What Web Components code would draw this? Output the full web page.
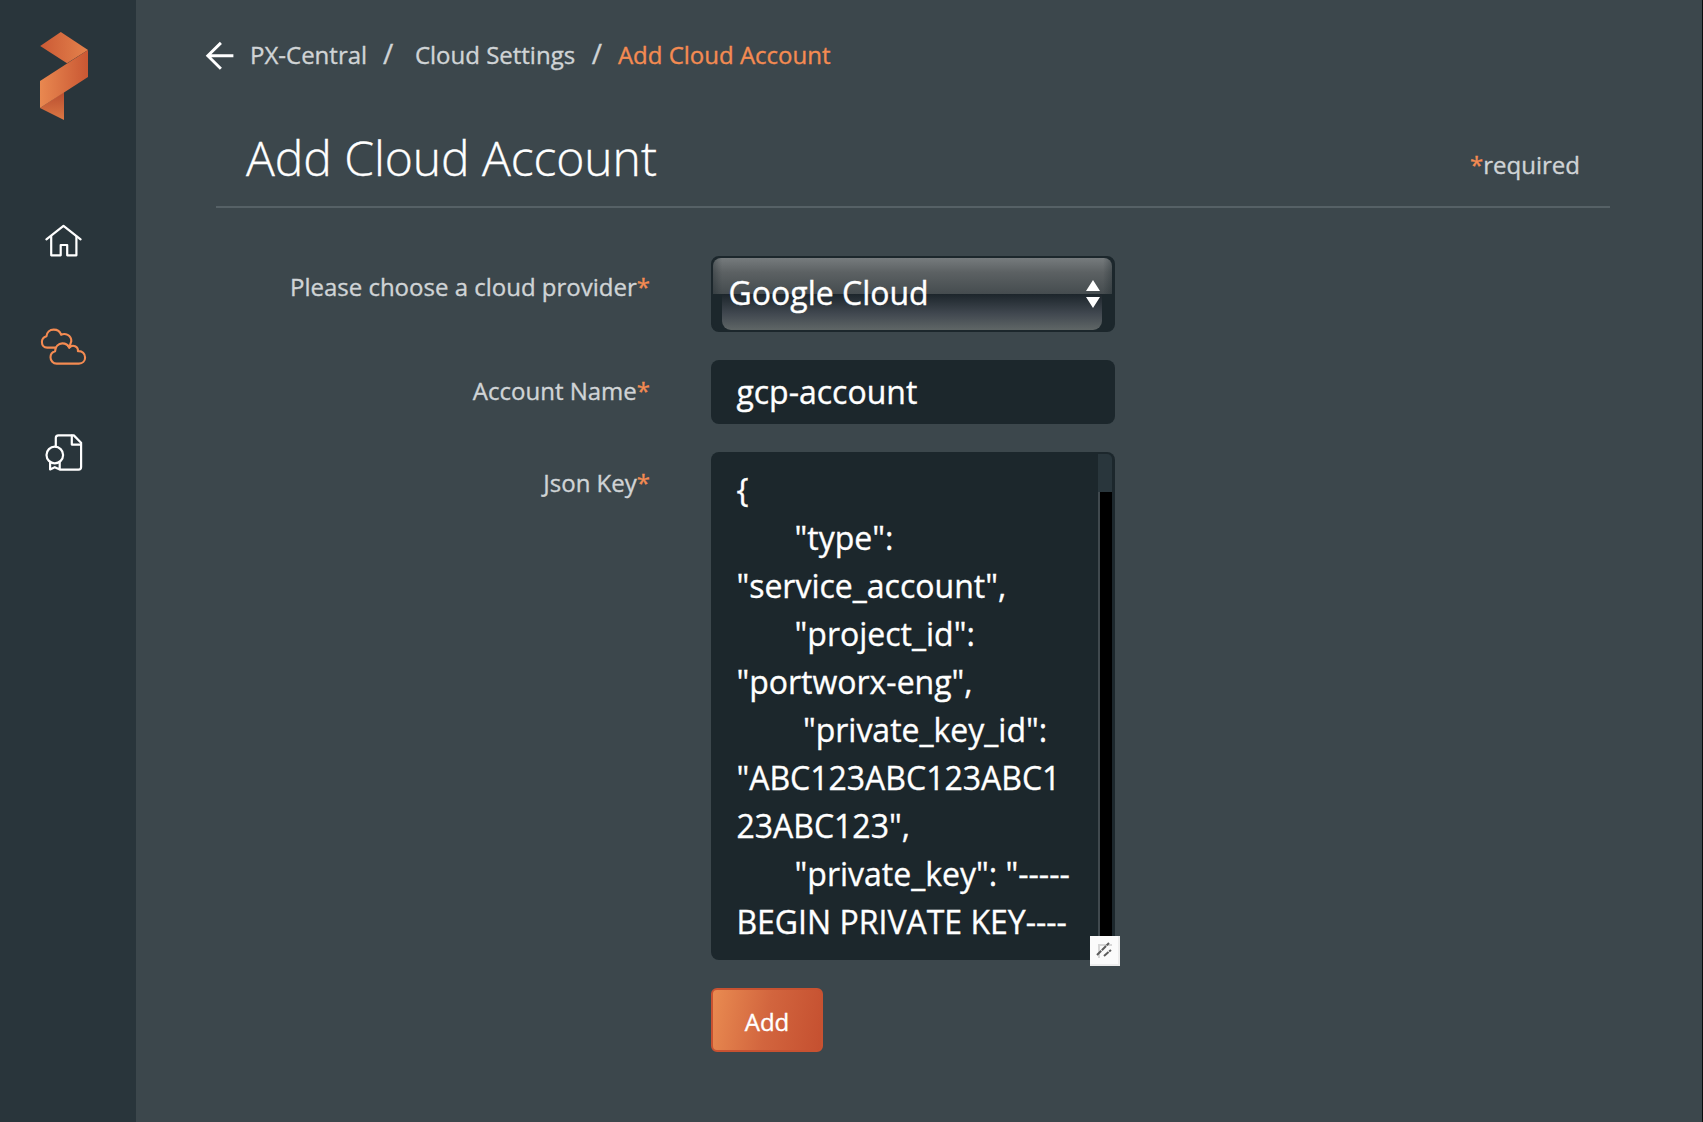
<!DOCTYPE html>
<html lang="en">
<head>
<meta charset="utf-8">
<title>Add Cloud Account</title>
<style>
html, body { margin: 0; height: 100%; overflow: hidden; }
body { font-family: "Open Sans", "Noto Sans", sans-serif; font-size: 24px; line-height: 32px; color: #d0d4d6; background: #3c474c; -webkit-text-stroke: 0.35px currentColor; }
</style>
</head>
<body>
<px-app></px-app>
<script>
function define(name, markup) {
  const template = document.createElement('template');
  template.innerHTML = markup;
  customElements.define(name, class extends HTMLElement {
    constructor() {
      super();
      this.attachShadow({ mode: 'open' }).appendChild(template.content.cloneNode(true));
    }
  });
}

define('px-logo', `
<style>:host{display:block;width:48px;height:88px}svg{display:block}</style>
<svg width="48" height="88" viewBox="40 32 48 88">
  <defs>
    <linearGradient id="a"><stop offset="0" stop-color="#cb5a35"/><stop offset="1" stop-color="#e4824c"/></linearGradient>
    <linearGradient id="b"><stop offset="0" stop-color="#e98850"/><stop offset="1" stop-color="#c95733"/></linearGradient>
    <linearGradient id="c" x1="0" y1="0" x2="0" y2="1"><stop offset="0" stop-color="#b94e30"/><stop offset="1" stop-color="#dc7844"/></linearGradient>
  </defs>
  <path fill="url(#c)" d="M64 92V120L40 108Z"/>
  <path fill="url(#a)" d="M40.2 46L60.8 32L88 50L67 63.2Z"/>
  <path fill="url(#b)" d="M88 50V77L40 108V81Z"/>
</svg>`);

define('px-icon-home', `
<style>:host{display:block;width:40px;height:36px;color:#fff}svg{display:block}</style>
<svg width="40" height="36" viewBox="43.6 222 40 36" fill="none" stroke="currentColor" stroke-width="2.2" stroke-linecap="round" stroke-linejoin="round">
  <path d="M46 239.3L63.1 225.8L80.2 239.3"/><path d="M50.8 236.5V255.3H60.3V245H66.8V255.3H76V236.5"/>
</svg>`);

define('px-icon-clouds', `
<style>:host{display:block;width:48px;height:40px;color:#f48b52}svg{display:block}</style>
<svg width="48" height="40" viewBox="40.3 326 48 40" fill="none" stroke="currentColor" stroke-width="2.1" stroke-linecap="round" stroke-linejoin="round">
  <path d="M56 347.6H47.5C44.2 347.6 42.2 345.2 42.2 342C42.2 339 44 337 46.8 336.2C47 332.3 50 329.6 54 329.6C57.6 329.6 60.4 331.6 61.4 334.8C65.2 332.8 71.8 335 71.6 341.2L70.2 345.5"/>
  <path d="M57 363.6C53.4 363.6 50.8 360.8 50.8 357.2C50.8 354.2 52.6 352 55.4 351.2C55.4 346.8 58.6 343.4 62.6 343.4C65.8 343.4 68.4 345 69.6 347.6C73 343.8 78.8 346.4 78.2 351.2C82.6 350.8 85.4 353.6 85.4 357.4C85.4 361 82.8 363.6 79.2 363.6Z"/>
  <path d="M68.2 345.6L69.6 347.6L71 345.6"/>
</svg>`);

define('px-icon-license', `
<style>:host{display:block;width:40px;height:40px;color:#fff}svg{display:block}</style>
<svg width="40" height="40" viewBox="44.2 432 40 40" fill="none" stroke="currentColor" stroke-width="2.2" stroke-linecap="round" stroke-linejoin="round">
  <path d="M56 446.5V438Q56 435.4 58.6 435.4H74L81.3 442.7V467Q81.3 469.6 78.7 469.6H60.5"/>
  <path d="M72 435.6V444.6H81"/>
  <circle cx="55" cy="455" r="8.3"/>
  <path d="M50.3 462V469.4L55 467.2L59.9 469.4V462"/>
</svg>`);

define('px-sidebar', `
<style>
:host{display:flex;flex-direction:column;align-items:center;box-sizing:border-box;width:136px;height:100%;padding-top:32px;background:#29353b;flex:none}
px-logo{margin-right:8px}
nav{display:flex;flex-direction:column;align-items:center;width:128px;padding-top:102px;margin-right:8px}
px-icon-clouds{margin:68px 0 66px}
</style>
<px-logo></px-logo>
<nav><px-icon-home></px-icon-home><px-icon-clouds></px-icon-clouds><px-icon-license></px-icon-license></nav>`);

define('px-breadcrumb', `
<style>
:host{display:flex;align-items:baseline;height:34px;padding:37px 0 0 69px;white-space:nowrap}
svg{display:block;align-self:center;width:30px;height:30px;flex:none;margin-top:4px}
.a{margin-left:15px}
i{font-style:normal;font-size:28px;line-height:32px}
.s1{margin:0 21.5px 0 16px}.s2{margin:0 16px 0 16.5px}
.cur{color:#f48b52}
</style>
<svg viewBox="205.4 41 30 30" fill="none" stroke="#fff" stroke-width="2.9"><path d="M233.8 55.8H208M221.3 42.9L208.2 55.8L221.3 68.8"/></svg>
<span class="a">PX-Central</span><i class="s1">/</i><span>Cloud Settings</span><i class="s2">/</i><span class="cur">Add Cloud Account</span>`);

define('px-title', `
<style>
:host{display:flex;justify-content:space-between;align-items:flex-start;box-sizing:border-box;height:102px;margin:35px 92px 0 80px;padding:19px 30px 0 30px;border-bottom:2px solid #566166}
h1{margin:0;font-weight:300;font-size:48px;line-height:66px;letter-spacing:-.06px;color:#fff;white-space:nowrap}
span{padding-top:24px}
b{font-weight:400;color:#f48b52}
</style>
<h1><slot></slot></h1><span><b>*</b>required</span>`);

define('px-field', `
<style>
:host{display:flex;align-items:flex-start}
label{width:514px;margin-right:61px;text-align:right;flex:none;padding-top:15px}
b{font-weight:400;color:#f48b52}
</style>
<label><slot name="label"></slot><b>*</b></label><slot></slot>`);

define('px-select', `
<style>
:host{display:flex;box-sizing:border-box;width:404px;height:76px;border:2px solid #1c272c;border-right-width:3px;border-radius:8px;background:#1c272c;color:#fff;font-size:32px}
.face{display:flex;flex:1;align-items:center;justify-content:space-between;padding:0 12px 2px 15.5px;border-radius:8px;
background:linear-gradient(90deg,rgba(28,39,44,.35),transparent 9px,transparent calc(100% - 9px),rgba(28,39,44,.35)) top/100% 36px no-repeat,linear-gradient(#767b7d,#5c6163 40%,#454c4f) top/100% 36px no-repeat;position:relative;isolation:isolate}
.face::after{content:"";position:absolute;z-index:-1;left:9px;right:10px;top:36px;bottom:0;border-radius:0 0 9px 9px;background:linear-gradient(#1c252b,#414850 55%,#5f6666)}
svg{display:block;margin-top:2px}
</style>
<div class="face"><span><slot></slot></span><svg width="14" height="28" fill="#fff"><path d="M7 0L14 11H0ZM0 17H14L7 28Z"/></svg></div>`);

define('px-input', `
<style>
:host{display:flex;align-items:center;box-sizing:border-box;width:404px;height:64px;padding-left:25.4px;border-radius:8px;background:#1c272c;color:#fff;font-size:32px}
</style><span><slot></slot></span>`);

define('px-textarea', `
<style>
:host{display:flex;position:relative;box-sizing:border-box;width:404px;height:508px;padding:2px 3px 0 25.4px;border-radius:8px;background:#1c272c;color:#fff;font-size:32px;line-height:48px}
pre{flex:1;width:0;margin:0;padding-top:12px;font:inherit;white-space:pre}
.bar{width:14px;height:482px;display:flex;flex-direction:column}
.thumb{height:38px;background:#29363c;border-radius:0 5px 0 0}
.track{flex:1;background:#000;border-left:2px solid #40494e}
svg{position:absolute;right:-5px;bottom:-6px}
</style>
<pre><slot></slot></pre>
<div class="bar"><div class="thumb"></div><div class="track"></div></div>
<svg width="30" height="30"><path fill="#ededed" d="M0 0H30V30H0Z"/><path fill="#fbfbfb" d="M0 0H28V28H0Z"/><path d="M9 22V9H22" fill="none" stroke="#d6d6d6" stroke-width="2"/><path d="M7 19L19 7M14 20L21 14" fill="none" stroke="#5c5c5c" stroke-width="2" stroke-dasharray="6 .8"/></svg>`);

define('px-button', `
<style>
:host{display:flex;align-items:center;justify-content:center;box-sizing:border-box;width:112px;height:64px;border:2px solid #c85231;border-radius:6px;background:linear-gradient(100deg,#e98b51,#d2653e 50%,#c55030);color:#fff;padding-top:4px}
</style><slot></slot>`);

define('px-app', `
<style>
:host{display:flex;height:100vh;overflow:hidden}
main{flex:1;min-width:0;border-right:1px solid #0b0d0e}
form{display:flex;flex-direction:column;padding-top:48px}
px-field+px-field{margin-top:28px}
px-button{margin:28px 0 0 575px}
</style>
<px-sidebar></px-sidebar>
<main>
<px-breadcrumb></px-breadcrumb>
<px-title>Add Cloud Account</px-title>
<form>
<px-field><span slot="label">Please choose a cloud provider</span><px-select>Google Cloud</px-select></px-field>
<px-field><span slot="label">Account Name</span><px-input>gcp-account</px-input></px-field>
<px-field><span slot="label">Json Key</span><px-textarea>{
       "type":
"service_account",
       "project_id":
"portworx-eng",
        "private_key_id":
"ABC123ABC123ABC1
23ABC123",
       "private_key": "-----
BEGIN PRIVATE KEY----</px-textarea></px-field>
<px-button>Add</px-button>
</form>
</main>`);
</script>
</body>
</html>
